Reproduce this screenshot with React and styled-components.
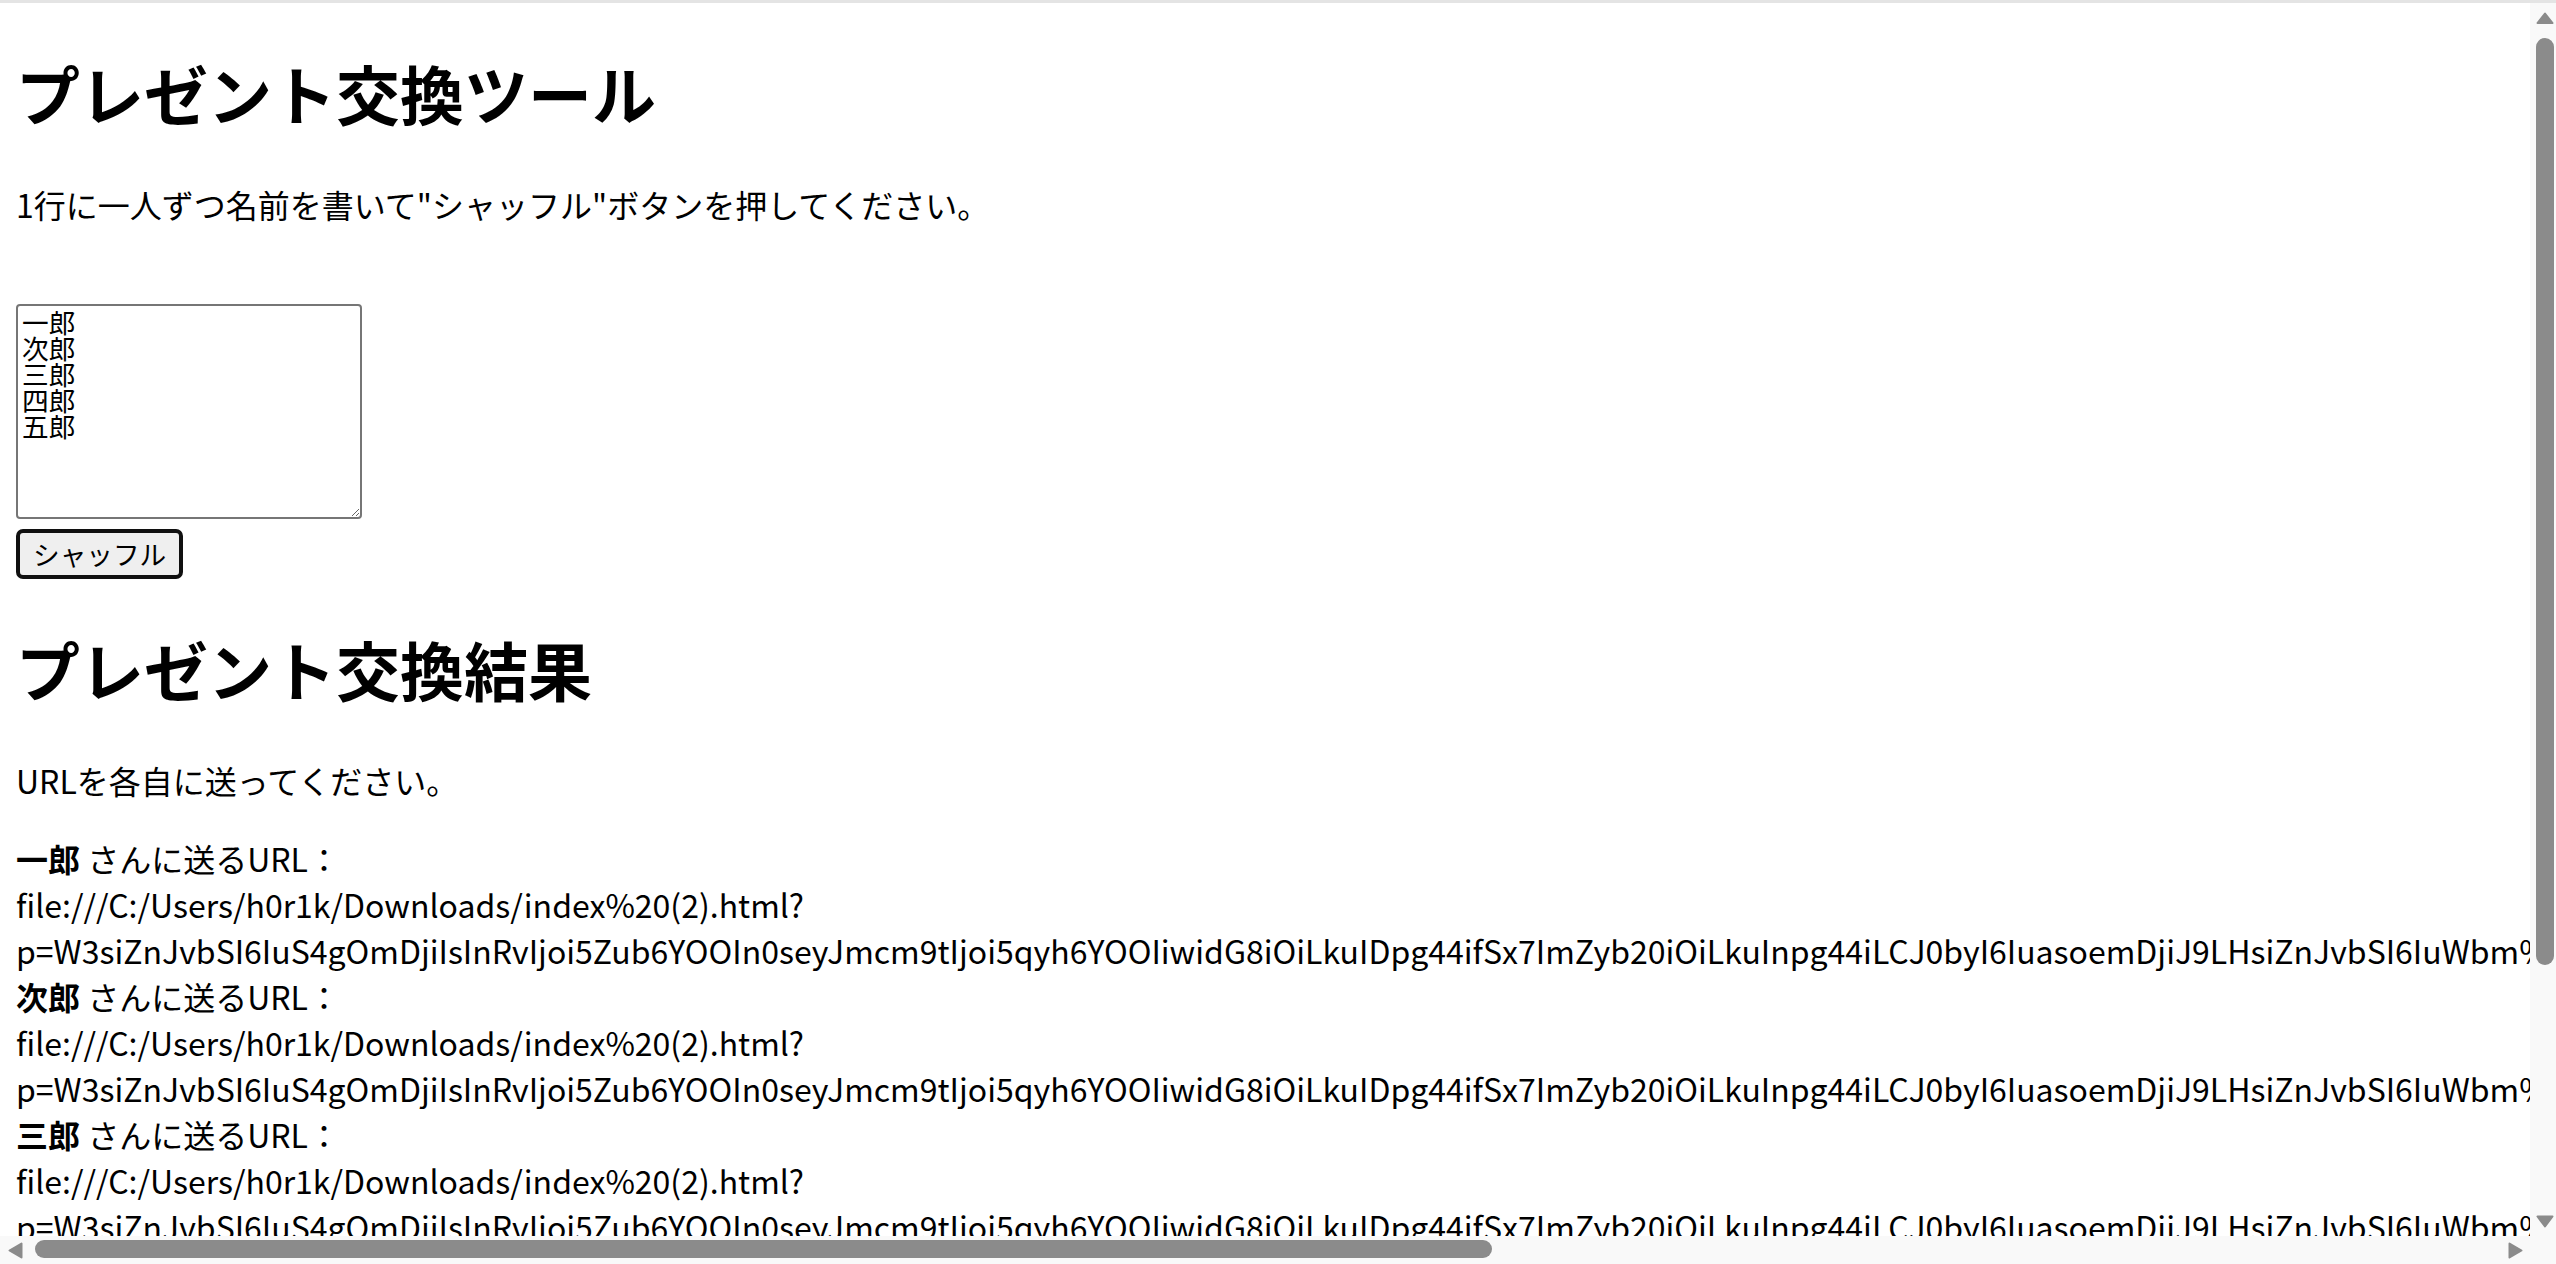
import styled, { createGlobalStyle } from "styled-components";

const GlobalStyle = createGlobalStyle`
  html, body {
    margin: 0;
    height: 100%;
    overflow: hidden;
    background: #ffffff;
  }
`;

const Frame = styled.div`
  box-sizing: border-box;
  height: 100vh;
  border-top: 3px solid #e4e4e4;
  display: grid;
  grid-template-columns: 1fr 26px;
  grid-template-rows: 1fr 28px;
  color: #000;
  font-family: "Noto Sans CJK JP", "Noto Sans", sans-serif;
  font-size: 32px;
`;

const Viewport = styled.div`
  overflow: hidden;
  min-width: 0;
  min-height: 0;
`;

const Page = styled.main`
  padding: 0 16px 16px;
`;

const Title = styled.h1`
  font-size: 64px;
  font-weight: 700;
  margin: 43px 0;
`;

const Text = styled.p`
  margin: 32px 0;
`;

const Editor = styled.div`
  display: flex;
  flex-direction: column;
  align-items: flex-start;
  gap: 10px;
  margin-top: 77px;
`;

const Names = styled.textarea`
  box-sizing: border-box;
  width: 346px;
  height: 215px;
  margin: 0;
  padding: 3px 4px;
  border: 2px solid #767676;
  border-radius: 4px;
  font-family: "Noto Sans CJK JP", sans-serif;
  font-size: 26.667px;
  line-height: 26px;
  color: #000;
  background: #fff;
  outline: none;
`;

const ShuffleButton = styled.button`
  box-sizing: border-box;
  height: 50px;
  margin: 0;
  padding: 0 13px;
  border: 4px solid #101010;
  border-radius: 7px;
  background: #efefef;
  color: #000;
  font-family: "Noto Sans CJK JP", sans-serif;
  font-size: 26.667px;
  line-height: 1;
  cursor: pointer;
`;

const Entry = styled.div``;

const Name = styled.b`
  font-weight: 700;
`;

const Url = styled.div``;

const Query = styled.span`
  white-space: nowrap;
`;

/* scrollbars drawn by hand */
const VScroll = styled.div`
  display: flex;
  flex-direction: column;
  background: #f9f9f9;
  min-height: 0;
`;

const HScroll = styled.div`
  display: flex;
  background: #f9f9f9;
  min-width: 0;
`;

const Corner = styled.div`
  background: #f9f9f9;
`;

const ArrowBox = styled.div`
  flex: none;
  display: flex;
  align-items: center;
  justify-content: center;
  width: ${(p) => (p.$vertical ? "26px" : "30px")};
  height: ${(p) => (p.$vertical ? "30px" : "28px")};
  padding-left: ${(p) => (p.$vertical ? "4px" : "0")};
  box-sizing: border-box;
`;

const Track = styled.div`
  flex: 1;
  min-width: 0;
  min-height: 0;
  padding: ${(p) => (p.$vertical ? "5px 2px 0 6px" : "4px 0 0 5px")};
`;

const Thumb = styled.div`
  background: #8b8b8b;
  border-radius: 9px;
  width: ${(p) => (p.$vertical ? "18px" : `${p.$length}px`)};
  height: ${(p) => (p.$vertical ? `${p.$length}px` : "18px")};
`;

const arrowPoints = {
  up: { w: 18, h: 12, pts: "9,1.5 16.5,11 1.5,11" },
  down: { w: 18, h: 13, pts: "1.5,1.5 16.5,1.5 9,11.5" },
  left: { w: 15, h: 17, pts: "1.5,8.5 13.5,1.5 13.5,15.5" },
  right: { w: 15, h: 17, pts: "1.5,1.5 13.5,8.5 1.5,15.5" },
};

function Arrow({ dir }) {
  const a = arrowPoints[dir];
  const vertical = dir === "up" || dir === "down";
  return (
    <ArrowBox $vertical={vertical}>
      <svg width={a.w} height={a.h} viewBox={`0 0 ${a.w} ${a.h}`}>
        <polygon
          points={a.pts}
          fill="#8b8b8b"
          stroke="#8b8b8b"
          strokeWidth="2"
          strokeLinejoin="round"
        />
      </svg>
    </ArrowBox>
  );
}

const names = ["一郎", "次郎", "三郎", "四郎", "五郎"];

const pairs = [
  { from: "一郎", to: "四郎" },
  { from: "次郎", to: "一郎" },
  { from: "三郎", to: "次郎" },
  { from: "四郎", to: "五郎" },
  { from: "五郎", to: "三郎" },
];

const encoded = encodeURIComponent(
  btoa(String.fromCharCode(...new TextEncoder().encode(JSON.stringify(pairs))))
);

const base = "file:///C:/Users/h0r1k/Downloads/index%20(2).html?";

function App() {
  return (
    <>
      <GlobalStyle />
      <Frame>
        <Viewport>
          <Page>
            <Title>プレゼント交換ツール</Title>
            <Text>1行に一人ずつ名前を書いて"シャッフル"ボタンを押してください。</Text>
            <Editor>
              <Names defaultValue={names.join("\n")} />
              <ShuffleButton>シャッフル</ShuffleButton>
            </Editor>

            <Title>プレゼント交換結果</Title>
            <Text>URLを各自に送ってください。</Text>
            {names.map((name) => (
              <Entry key={name}>
                <div>
                  <Name>{name}</Name> さんに送るURL：
                </div>
                <Url>
                  {base}
                  <wbr />
                  <Query>p={encoded}</Query>
                </Url>
              </Entry>
            ))}
          </Page>
        </Viewport>

        <VScroll>
          <Arrow dir="up" />
          <Track $vertical>
            <Thumb $vertical $length={927} />
          </Track>
          <Arrow dir="down" />
        </VScroll>

        <HScroll>
          <Arrow dir="left" />
          <Track>
            <Thumb $length={1457} />
          </Track>
          <Arrow dir="right" />
        </HScroll>

        <Corner />
      </Frame>
    </>
  );
}

export default App;
